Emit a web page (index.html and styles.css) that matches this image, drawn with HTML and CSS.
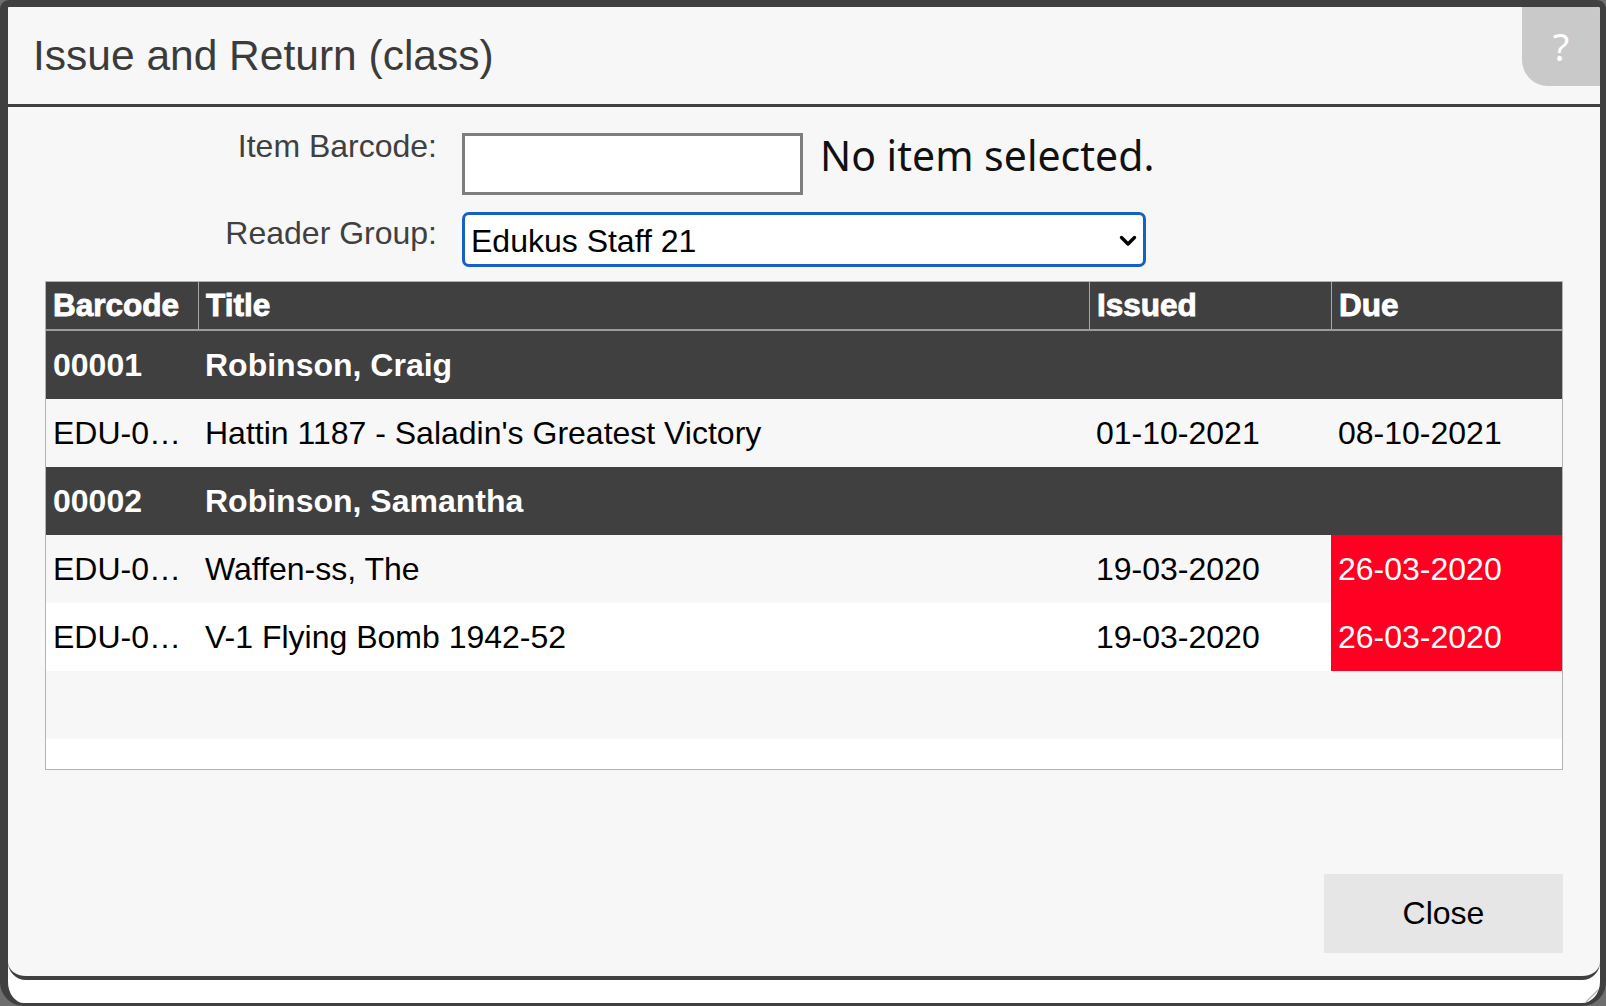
FILE: index.html
```html
<!DOCTYPE html>
<html lang="en">
<head>
<meta charset="utf-8">
<title>Issue and Return (class)</title>
<link rel="stylesheet" href="styles.css">
</head>
<body>
<div class="frame">
  <div class="dialog">
    <header class="dlg-head">
      <h1 class="dlg-title">Issue and Return (class)</h1>
      <button class="help-btn" type="button">?</button>
    </header>
    <main class="dlg-body">
      <div class="form-row row-barcode">
        <label class="field-label" for="barcode">Item Barcode:</label>
        <input class="barcode-input" id="barcode" type="text">
        <span class="status-msg">No item selected.</span>
      </div>
      <div class="form-row row-group">
        <label class="field-label" for="group">Reader Group:</label>
        <div class="select-wrap">
          <select class="group-select" id="group">
            <option>Edukus Staff 21</option>
          </select>
          <svg class="chevron" viewBox="0 0 18 12" aria-hidden="true"><path d="M2.5 2.5 L9 9 L15.5 2.5" fill="none" stroke="#000" stroke-width="3.4" stroke-linecap="round" stroke-linejoin="round"/></svg>
        </div>
      </div>
      <div class="loans-table">
        <div class="t-row t-head">
          <div class="cell">Barcode</div>
          <div class="cell">Title</div>
          <div class="cell">Issued</div>
          <div class="cell">Due</div>
        </div>
        <div class="t-row t-group">
          <div class="cell">00001</div>
          <div class="cell cell-name">Robinson, Craig</div>
        </div>
        <div class="t-row t-item alt">
          <div class="cell">EDU-0…</div>
          <div class="cell">Hattin 1187 - Saladin's Greatest Victory</div>
          <div class="cell">01-10-2021</div>
          <div class="cell">08-10-2021</div>
        </div>
        <div class="t-row t-group">
          <div class="cell">00002</div>
          <div class="cell cell-name">Robinson, Samantha</div>
        </div>
        <div class="t-row t-item alt">
          <div class="cell">EDU-0…</div>
          <div class="cell">Waffen-ss, The</div>
          <div class="cell">19-03-2020</div>
          <div class="cell overdue">26-03-2020</div>
        </div>
        <div class="t-row t-item">
          <div class="cell">EDU-0…</div>
          <div class="cell">V-1 Flying Bomb 1942-52</div>
          <div class="cell">19-03-2020</div>
          <div class="cell overdue">26-03-2020</div>
        </div>
        <div class="t-row t-item alt t-empty"></div>
      </div>
      <div class="actions">
        <button class="close-btn" type="button">Close</button>
      </div>
    </main>
  </div>
  <div class="frame-foot">
    <svg class="grip" viewBox="0 0 14 14" aria-hidden="true">
      <path d="M1 14 L14 1 M6 14 L14 6 M11 14 L14 11" stroke="#b4b4b4" stroke-width="1.3" fill="none"/>
    </svg>
  </div>
</div>
</body>
</html>
```

FILE: styles.css
```css
html, body {
  margin: 0;
  padding: 0;
}

body {
  background: #6e6e6e;
  font-family: "Liberation Sans", Arial, Helvetica, sans-serif;
}

.frame {
  box-sizing: border-box;
  width: 1606px;
  height: 1006px;
  border-style: solid;
  border-color: #404040;
  border-width: 7px 6px 3px 8px;
  border-radius: 9px 9px 24px 24px;
  background: #fff;
  display: flex;
  flex-direction: column;
  overflow: hidden;
}

.dialog {
  flex: none;
  height: 973px;
  box-sizing: border-box;
  background: #f7f7f7;
  border-bottom: 4px solid #404040;
  border-radius: 0 0 18px 18px;
  display: flex;
  flex-direction: column;
}

.dlg-head {
  flex: none;
  height: 100px;
  box-sizing: border-box;
  border-bottom: 3px solid #404040;
  display: flex;
  align-items: center;
  padding-left: 25px;
}

.dlg-title {
  flex: 1;
  margin: 0;
  font-size: 42.5px;
  font-weight: 400;
  line-height: 48px;
  color: #3b3b3b;
}

.help-btn {
  align-self: flex-start;
  flex: none;
  width: 78px;
  height: 79px;
  border: 0;
  padding: 0;
  background: #c9c9c9;
  border-bottom-left-radius: 26px;
  color: #fff;
  font-family: "Noto Sans", "DejaVu Sans", sans-serif;
  font-size: 38px;
  line-height: 79px;
}

.dlg-body {
  flex: 1;
  min-height: 0;
  display: flex;
  flex-direction: column;
  padding: 26px 37px 23px;
}

.form-row {
  display: flex;
  align-items: flex-start;
  flex: none;
}

.row-barcode {
  height: 62px;
  margin-bottom: 17px;
}

.row-group {
  height: 55px;
  margin-bottom: 14px;
}

.field-label {
  flex: none;
  width: 392px;
  margin-right: 25px;
  text-align: right;
  font-size: 32px;
  line-height: 36px;
  color: #404040;
}

.row-barcode .field-label {
  margin-top: -5px;
}

.row-group .field-label {
  margin-top: 3px;
}

.barcode-input {
  flex: none;
  box-sizing: border-box;
  width: 341px;
  height: 62px;
  margin: 0;
  padding: 0 8px;
  border: 3px solid #7e7e7e;
  border-radius: 0;
  background: #fff;
  font: inherit;
  outline: none;
}

.status-msg {
  margin-left: 17px;
  margin-top: -2px;
  font-family: "Noto Sans", "Open Sans", sans-serif;
  font-size: 41px;
  line-height: 48px;
  color: #111;
}

.select-wrap {
  position: relative;
  flex: none;
  width: 684px;
  height: 55px;
}

.group-select {
  -webkit-appearance: none;
  appearance: none;
  box-sizing: border-box;
  width: 100%;
  height: 100%;
  margin: 0;
  padding: 2px 0 0 6px;
  border: 3px solid #1460c4;
  border-radius: 7px;
  background: #fff;
  font-family: "Liberation Sans", Arial, sans-serif;
  font-size: 32px;
  color: #000;
  outline: none;
}

.chevron {
  position: absolute;
  right: 9px;
  top: 23px;
  width: 18px;
  height: 12px;
  pointer-events: none;
}

.loans-table {
  flex: none;
  box-sizing: border-box;
  height: 489px;
  border: 1px solid #b3b3b3;
  background: #fff;
  overflow: hidden;
}

.t-row {
  display: grid;
  grid-template-columns: 152px 891px 242px 231px;
  height: 68px;
}

.cell {
  box-sizing: border-box;
  display: flex;
  align-items: center;
  padding: 0 7px;
  white-space: nowrap;
  overflow: hidden;
  font-size: 32px;
}

.t-head {
  height: 49px;
  box-sizing: border-box;
  border-bottom: 2px solid #9c9c9c;
  background: #404040;
  color: #fff;
}

.t-head .cell {
  font-size: 31.5px;
  font-weight: 700;
  -webkit-text-stroke: 0.9px #fff;
}

.t-head .cell + .cell {
  border-left: 1px solid #a8a8a8;
}

.t-group {
  background: #404040;
  color: #fff;
}

.t-group .cell {
  font-weight: 700;
}

.t-group .cell-name {
  grid-column: span 3;
}

.t-item {
  background: #fff;
  color: #000;
}

.t-item.alt {
  background: #f7f7f7;
}

.cell.overdue {
  background: #ff0022;
  color: #fff;
}

.actions {
  margin-top: auto;
  display: flex;
  justify-content: flex-end;
}

.close-btn {
  width: 239px;
  height: 79px;
  border: 0;
  border-radius: 0;
  padding: 0;
  background: #e6e6e6;
  font-family: "Liberation Sans", Arial, sans-serif;
  font-size: 32px;
  color: #000;
}

.frame-foot {
  flex: 1;
  display: flex;
  justify-content: flex-end;
  align-items: flex-end;
}

.grip {
  width: 14px;
  height: 14px;
  margin: 0 1px 1px 0;
}
```
